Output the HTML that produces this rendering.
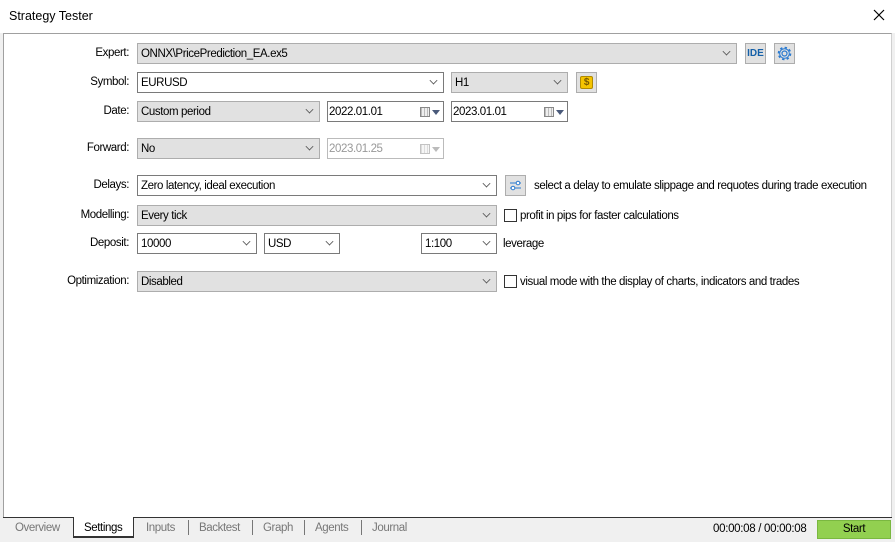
<!DOCTYPE html>
<html><head><style>
*{box-sizing:border-box;margin:0;padding:0}
body{width:895px;height:542px;background:#f0f0f0;font-family:"Liberation Sans",Arial,sans-serif;font-size:11.5px;letter-spacing:-0.4px;color:#000;position:relative;overflow:hidden;white-space:nowrap}
.a{position:absolute}
.title{left:0;top:0;width:895px;height:33px;background:#fff;}
.title span{position:absolute;left:9px;top:9px;font-size:12.5px;letter-spacing:0}
.panel{left:3px;top:33px;width:889px;height:485px;background:#fff;border-top:1px solid #a0a0a0;border-left:1px solid #a0a0a0;border-right:1px solid #d0d0d0}
.lbl{text-align:right;width:129px;left:0;line-height:21px}
.cb{height:21px;border:1px solid #adadad;background:#e1e1e1;line-height:20px;padding-left:3px}
.cb.w{background:#fff;border-color:#7a7a7a}
.cb .ch{position:absolute;right:6px;width:7px;height:7px;border-right:1px solid #555;border-bottom:1px solid #555;transform:rotate(45deg) scale(.8);top:4px}
.btn{width:21px;height:21px;border:1px solid #adadad;background:#e1e1e1}
.chk{width:13px;height:13px;border:1px solid #333;background:#fff}
.cal{position:absolute;right:13px;top:5px;width:10px;height:10px;border:1px solid #888;background:repeating-linear-gradient(90deg,#bbb 0 1px,#eee 1px 3px)}
.tri{position:absolute;right:3px;top:8px;border-left:4px solid transparent;border-right:4px solid transparent;border-top:5px solid #4a5a7a}
.tab{top:522px;color:#777}
.t{line-height:14px}
</style></head><body>
<div class="a title"><span>Strategy Tester</span>
<svg class="a" style="left:873px;top:9px" width="12" height="12"><path d="M1 1L11 11M11 1L1 11" stroke="#000" stroke-width="1.2"/></svg></div>
<div class="a panel"></div>

<div class="a lbl" style="top:43px">Expert:</div>
<div class="a cb" style="left:137px;top:43px;width:600px">ONNX\PricePrediction_EA.ex5<div class="ch"></div></div>
<div class="a btn" style="left:745px;top:43px;color:#1560a8;font-size:10px;font-weight:bold;text-align:center;line-height:19px;letter-spacing:0">IDE</div>
<div class="a btn" style="left:774px;top:43px"><svg width="19" height="19"><circle cx="9.5" cy="9.5" r="2.5" fill="none" stroke="#2a7ad0" stroke-width="1.2"/><circle cx="9.5" cy="9.5" r="6" fill="none" stroke="#2a7ad0" stroke-width="1.6" stroke-dasharray="2.4 2.3"/><circle cx="9.5" cy="9.5" r="4.8" fill="none" stroke="#2a7ad0" stroke-width="1"/></svg></div>

<div class="a lbl" style="top:72px">Symbol:</div>
<div class="a cb w" style="left:137px;top:72px;width:307px">EURUSD<div class="ch"></div></div>
<div class="a cb" style="left:451px;top:72px;width:117px">H1<div class="ch"></div></div>
<div class="a btn" style="left:576px;top:72px"><div class="a" style="left:3px;top:3px;width:13px;height:13px;background:#f5c400;border:1px solid #b08a00;border-radius:2px;color:#7a5a00;font-size:10px;font-weight:bold;text-align:center;line-height:11px">$</div></div>

<div class="a lbl" style="top:101px">Date:</div>
<div class="a cb" style="left:137px;top:101px;width:183px">Custom period<div class="ch"></div></div>
<div class="a cb w" style="left:327px;top:101px;width:117px;padding-left:1px">2022.01.01<div class="cal"></div><div class="tri"></div></div>
<div class="a cb w" style="left:451px;top:101px;width:117px;padding-left:1px">2023.01.01<div class="cal"></div><div class="tri"></div></div>

<div class="a lbl" style="top:138px">Forward:</div>
<div class="a cb" style="left:137px;top:138px;width:183px">No<div class="ch"></div></div>
<div class="a cb w" style="left:327px;top:138px;width:117px;padding-left:1px;color:#999;border-color:#bbb">2023.01.25<div class="cal" style="opacity:.5"></div><div class="tri" style="border-top-color:#bbb"></div></div>

<div class="a lbl" style="top:175px">Delays:</div>
<div class="a cb w" style="left:137px;top:175px;width:360px">Zero latency, ideal execution<div class="ch"></div></div>
<div class="a btn" style="left:505px;top:175px"><svg width="19" height="19"><path d="M4 7H15M4 12H15" stroke="#2a7ad0"/><circle cx="12" cy="7" r="1.8" fill="#fff" stroke="#2a7ad0"/><circle cx="7" cy="12" r="1.8" fill="#fff" stroke="#2a7ad0"/></svg></div>
<div class="a t" style="left:534px;top:179px">select a delay to emulate slippage and requotes during trade execution</div>

<div class="a lbl" style="top:205px">Modelling:</div>
<div class="a cb" style="left:137px;top:205px;width:360px">Every tick<div class="ch"></div></div>
<div class="a chk" style="left:504px;top:209px"></div>
<div class="a t" style="left:520px;top:209px">profit in pips for faster calculations</div>

<div class="a lbl" style="top:233px">Deposit:</div>
<div class="a cb w" style="left:137px;top:233px;width:120px">10000<div class="ch"></div></div>
<div class="a cb w" style="left:264px;top:233px;width:76px">USD<div class="ch"></div></div>
<div class="a cb w" style="left:421px;top:233px;width:76px">1:100<div class="ch"></div></div>
<div class="a t" style="left:503px;top:237px">leverage</div>

<div class="a lbl" style="top:271px">Optimization:</div>
<div class="a cb" style="left:137px;top:271px;width:360px">Disabled<div class="ch"></div></div>
<div class="a chk" style="left:504px;top:275px"></div>
<div class="a t" style="left:520px;top:275px">visual mode with the display of charts, indicators and trades</div>

<div class="a" style="left:3px;top:517px;width:889px;height:1px;background:#333"></div>
<div class="a" style="left:73px;top:517px;width:61px;height:21px;background:#fff;border:1px solid #333;border-top:none;border-bottom:2px solid #333"></div>
<div class="a tab" style="left:15px">Overview</div>
<div class="a tab" style="left:84px;color:#000">Settings</div>
<div class="a tab" style="left:146px">Inputs</div>
<div class="a" style="left:188px;top:520px;width:1px;height:15px;background:#777"></div>
<div class="a tab" style="left:199px">Backtest</div>
<div class="a" style="left:252px;top:520px;width:1px;height:15px;background:#777"></div>
<div class="a tab" style="left:263px">Graph</div>
<div class="a" style="left:304px;top:520px;width:1px;height:15px;background:#777"></div>
<div class="a tab" style="left:315px">Agents</div>
<div class="a" style="left:361px;top:520px;width:1px;height:15px;background:#777"></div>
<div class="a tab" style="left:372px">Journal</div>
<div class="a" style="left:713px;top:523px;font-size:11.5px;letter-spacing:-0.3px">00:00:08 / 00:00:08</div>
<div class="a" style="left:817px;top:520px;width:74px;height:19px;background:#92d050;border:1px solid #7ab840;text-align:center;line-height:17px">Start</div>
</body></html>
